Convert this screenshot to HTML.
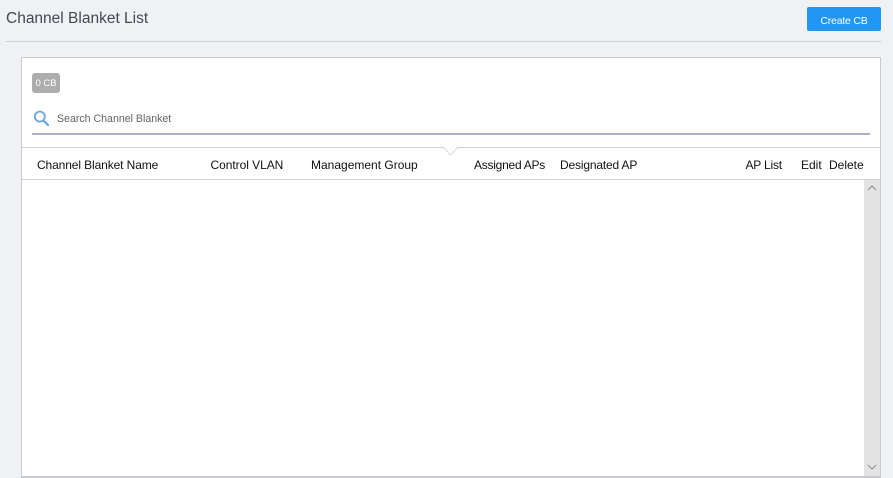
<!DOCTYPE html>
<html>
<head>
<meta charset="utf-8">
<style>
html,body{margin:0;padding:0;width:893px;height:478px;overflow:hidden;background:#f0f1f5;font-family:"Liberation Sans",sans-serif}
.a{position:absolute;white-space:nowrap}
.h{font-size:12px;color:#111;top:158px;line-height:14px}
</style>
</head>
<body>
<div class="a" style="left:6px;top:9px;font-size:15.5px;line-height:20px;color:#44494f">Channel Blanket List</div>
<div class="a" style="left:807px;top:7px;width:74px;height:24px;background:#2196f3;border-radius:2px;color:#fff;font-size:10.5px;letter-spacing:-.2px;line-height:29px;text-align:center">Create CB</div>
<div class="a" style="left:6px;top:41px;width:875px;height:1px;background:#cbcdd1"></div>

<div class="a" style="left:21px;top:57px;width:858px;height:418px;background:#fff;border:1px solid #c8cacd;border-bottom-width:2px"></div>

<div class="a" style="left:32px;top:73px;width:28px;height:20px;background:#adadad;border-radius:3px;color:#fff;font-size:9.5px;line-height:21px;text-align:center">0 CB</div>

<svg class="a" style="left:33px;top:110px" width="16" height="16" viewBox="0 0 16 16"><circle cx="6.8" cy="6.6" r="5" fill="none" stroke="#6fa5de" stroke-width="1.8"/><path d="M10.5 10.5L15 15" stroke="#6fa5de" stroke-width="2.2" stroke-linecap="round"/></svg>
<div class="a" style="left:57px;top:112px;font-size:10.6px;line-height:14px;color:#5f6368">Search Channel Blanket</div>
<div class="a" style="left:32px;top:133px;width:838px;height:2px;background:#a3b5c6"></div>

<div class="a" style="left:22px;top:147px;width:858px;height:1px;background:#cfd1d4"></div>
<svg class="a" style="left:443px;top:147px" width="15" height="9" viewBox="0 0 15 9"><path d="M0.5 0.5L7.5 8L14.5 0.5" fill="#fff" stroke="#d8dadc" stroke-width="1"/><path d="M1 0H14V.7H1Z" fill="#fff"/></svg>
<div class="a h" style="left:37px;letter-spacing:-.11px">Channel Blanket Name</div>
<div class="a h" style="left:210.5px;letter-spacing:-.05px">Control VLAN</div>
<div class="a h" style="left:311px">Management Group</div>
<div class="a h" style="left:474px;letter-spacing:-.25px">Assigned APs</div>
<div class="a h" style="left:560px;letter-spacing:-.17px">Designated AP</div>
<div class="a h" style="left:745.5px;letter-spacing:-.2px">AP List</div>
<div class="a h" style="left:801px">Edit</div>
<div class="a h" style="left:829px">Delete</div>
<div class="a" style="left:22px;top:179px;width:858px;height:1px;background:#cfd1d4"></div>

<div class="a" style="left:864px;top:180px;width:16px;height:296px;background:#e3e3e3"></div>
<svg class="a" style="left:864px;top:180px" width="16" height="296" viewBox="0 0 16 296"><path d="M4 10L8 6L12 10" fill="none" stroke="#8f8f8f" stroke-width="1.1"/><path d="M4 285L8 289L12 285" fill="none" stroke="#8f8f8f" stroke-width="1.1"/></svg>
</body>
</html>
